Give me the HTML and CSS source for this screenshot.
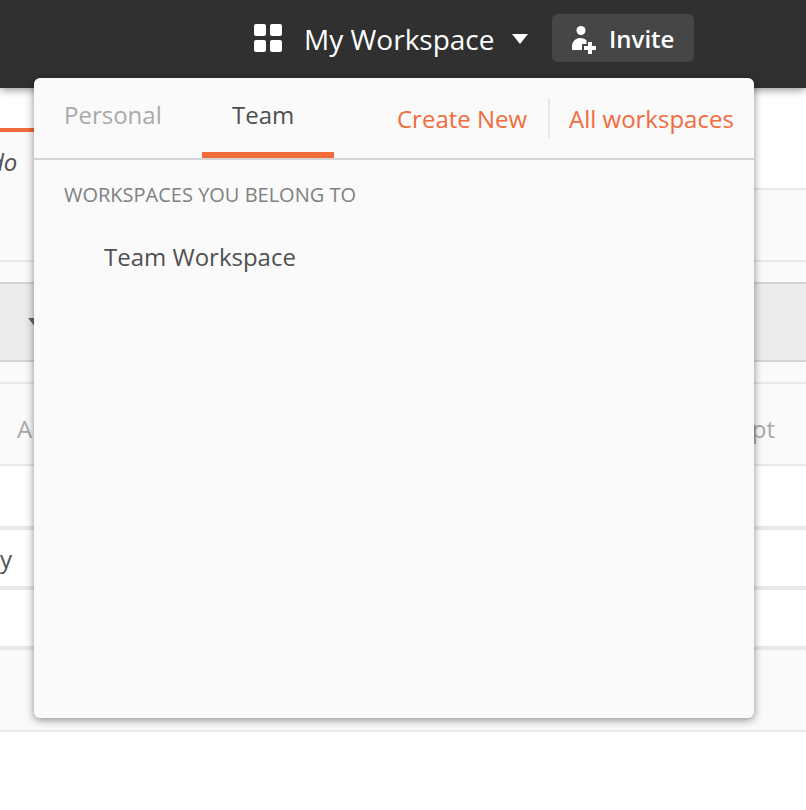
FILE: index.html
```html
<!DOCTYPE html>
<html lang="en">
<head>
<meta charset="utf-8">
<title>My Workspace</title>
<link rel="stylesheet" href="styles.css">
</head>
<body>
<header class="header">
  <svg class="grid-icon" width="28" height="28" viewBox="0 0 28 28" fill="#fff"><rect width="12" height="12" rx="2"/><rect x="16" width="12" height="12" rx="2"/><rect y="16" width="12" height="12" rx="2"/><rect x="16" y="16" width="12" height="12" rx="2"/></svg>
  <span class="workspace-name">My Workspace</span>
  <svg class="caret" width="16" height="10" viewBox="0 0 16 10" fill="#fff"><path d="M0 0h16L8 10z"/></svg>
  <button class="invite">
    <svg width="24" height="28" viewBox="0 0 24 28" fill="#fff"><circle cx="9" cy="4.500" r="4.500"/><path d="M0 24v-3.500C0 16 3.500 12 8 12c3 0 5.500 1 6.500 2.500V18H10v6z"/><path d="M16 16h4v4h4v4h-4v4h-4v-4h-4v-4h4z"/></svg>
    <span class="invite-label">Invite</span>
  </button>
</header>
<main class="page">
  <div class="tabs"><div class="tab"><span class="tab-title">do</span></div></div>
  <div class="title-row"></div>
  <div class="gap"></div>
  <div class="url-bar"><svg class="method-caret" width="16" height="10" viewBox="0 0 16 10" fill="#666"><path d="M0 0h16L8 10z"/></svg></div>
  <div class="spacer"></div>
  <nav class="request-tabs"><span class="auth">Authorization</span><span class="script">Pre-request Script</span></nav>
  <div class="row head"></div>
  <div class="row"><span class="key">y</span></div>
  <div class="row"></div>
  <div class="footer"></div>
</main>
<section class="popup">
  <div class="popup-head">
    <div class="ws-tab personal">Personal</div>
    <div class="ws-tab team">Team</div>
    <div class="actions"><a class="create">Create New</a><a class="all">All workspaces</a></div>
  </div>
  <h2 class="heading">WORKSPACES YOU BELONG TO</h2>
  <div class="item">Team Workspace</div>
</section>
</body>
</html>
```
FILE: styles.css
```css
* { box-sizing: border-box; }
body {
  margin: 0;
  width: 806px;
  height: 810px;
  overflow: hidden;
  position: relative;
  background: #fff;
  font: 24px/32px "Open Sans", sans-serif;
  color: #505050;
}
svg { display: block; flex: none; }
.header {
  position: relative;
  display: flex;
  align-items: flex-start;
  height: 88px;
  padding: 14px 0 0 254px;
  background: #303030;
  box-shadow: 0 0 10px rgba(0, 0, 0, .6);
  color: #fff;
}
.grid-icon { margin-top: 10px; }
.workspace-name {
  width: 208px;
  margin: 5px 0 0 22px;
  font-size: 28px;
  line-height: 40px;
  white-space: nowrap;
}
.caret { margin-top: 20px; }
.invite {
  display: flex;
  align-items: flex-start;
  width: 142px;
  height: 48px;
  margin-left: 24px;
  padding: 12px 0 0 20px;
  border: 0;
  border-radius: 6px;
  background: #464646;
  color: #fff;
  font: 600 24px/32px "Open Sans", sans-serif;
}
.invite-label { margin: -3px 0 0 13px; }
.page { display: flex; flex-direction: column; }
.tabs { display: flex; height: 102px; border-bottom: 2px solid #e8e8e8; }
.tab {
  width: 200px;
  height: 62px;
  margin-top: 40px;
  border-top: 4px solid #f26b3a;
  background: #fafafa;
}
.tab-title { display: block; margin: 14px 0 0 -10px; font-style: italic; }
.title-row { height: 72px; background: #fafafa; border-bottom: 2px solid #e8e8e8; }
.gap { height: 20px; background: #fafafa; }
.url-bar {
  height: 80px;
  padding: 34px 0 0 28px;
  background: #ebebeb;
  border: solid #d4d4d4;
  border-width: 2px 0;
}
.spacer { height: 22px; background: #fafafa; border-bottom: 2px solid #e8e8e8; }
.request-tabs {
  display: flex;
  justify-content: space-between;
  height: 82px;
  padding: 29px 31px 0 17px;
  background: #fafafa;
  border-bottom: 2px solid #e8e8e8;
  color: #a9a9a9;
}
.row { height: 60px; border-bottom: 4px solid #e8e8e8; }
.row.head { height: 64px; }
.key { display: block; margin: 13px 0 0; }
.footer { height: 82px; background: #fafafa; border-bottom: 2px solid #e8e8e8; }
.popup {
  position: absolute;
  left: 34px;
  top: 78px;
  width: 720px;
  height: 640px;
  border-radius: 6px;
  background: #fafafa;
  box-shadow: 0 2px 8px rgba(0, 0, 0, .45);
}
.popup-head { display: flex; height: 82px; border-bottom: 2px solid #d4d4d4; }
.ws-tab { height: 80px; padding: 21px 0 0 30px; }
.personal { width: 168px; color: #a9a9a9; }
.team { width: 132px; border-bottom: 6px solid #f26b3a; }
.actions { display: flex; margin: 20px 0 0 63px; color: #f26b3a; white-space: nowrap; }
.actions a { height: 40px; padding-top: 5px; }
.create { width: 153px; border-right: 2px solid #e8e8e8; }
.all { padding-left: 19px; }
.heading {
  margin: 22px 0 0 30px;
  font-size: 20px;
  line-height: 26px;
  font-weight: 400;
  color: #808080;
}
.item { margin: 33px 0 0 70px; }
```
